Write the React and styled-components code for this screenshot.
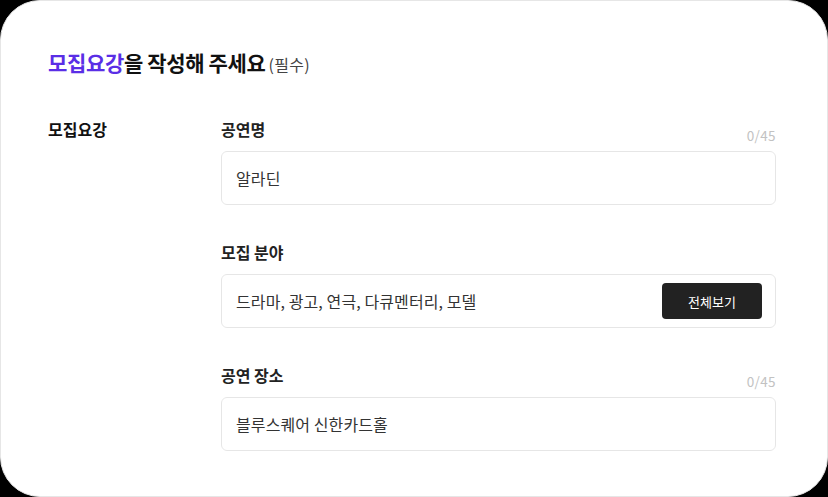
import React from 'react';
import styled, { createGlobalStyle } from 'styled-components';

const GlobalStyle = createGlobalStyle`
  html, body {
    margin: 0;
    padding: 0;
    background: #000;
  }
  body {
    font-family: "Noto Sans CJK KR", "Noto Sans", sans-serif;
  }
`;

const Card = styled.div`
  box-sizing: border-box;
  width: 828px;
  height: 497px;
  background: #fff;
  border: 1.5px solid #e6e6e6;
  border-radius: 40px;
  padding: 46px 51px 0 47px;
  overflow: hidden;
`;

const Title = styled.h2`
  margin: 0;
  font-size: 21px;
  line-height: 30px;
  font-weight: 700;
  color: #111;
  letter-spacing: -0.35px;
`;

const Accent = styled.span`
  color: #5a2ee6;
`;

const Required = styled.span`
  margin-left: 3px;
  font-size: 16px;
  font-weight: 400;
  color: #444;
  letter-spacing: 0.3px;
`;

const Section = styled.div`
  display: grid;
  grid-template-columns: 173px 1fr;
  margin-top: 38px;
`;

const SectionLabel = styled.div`
  font-size: 16px;
  line-height: 24px;
  font-weight: 700;
  color: #111;
`;

const Fields = styled.div`
  display: flex;
  flex-direction: column;
  gap: 35px;
`;

const Field = styled.div`
  display: flex;
  flex-direction: column;
  gap: 10px;
`;

const LabelRow = styled.div`
  display: flex;
  justify-content: space-between;
  align-items: flex-end;
`;

const FieldLabel = styled.div`
  font-size: 16px;
  line-height: 24px;
  font-weight: 700;
  color: #222;
`;

const Counter = styled.div`
  font-size: 13.5px;
  line-height: 20px;
  color: #c2c2c2;
  letter-spacing: 0.4px;
  margin-bottom: -4px;
`;

const Box = styled.div`
  box-sizing: border-box;
  height: 54px;
  border: 1px solid #e6e6e6;
  border-radius: 6px;
  padding: 0 13px 0 14px;
  display: flex;
  align-items: center;
  justify-content: space-between;
`;

const Value = styled.span`
  font-size: 16px;
  color: #333;
  letter-spacing: 0.1px;
`;

const ViewAll = styled.button`
  width: 100px;
  height: 36px;
  border: none;
  border-radius: 4px;
  background: #222;
  color: #fff;
  font-family: inherit;
  font-size: 13px;
  cursor: pointer;
`;

const fields = [
  { label: '공연명', value: '알라딘', counter: '0/45' },
  { label: '모집 분야', value: '드라마, 광고, 연극, 다큐멘터리, 모델', action: '전체보기' },
  { label: '공연 장소', value: '블루스퀘어 신한카드홀', counter: '0/45' },
];

const App = () => (
  <>
    <GlobalStyle />
    <Card>
      <Title>
        <Accent>모집요강</Accent>을 작성해 주세요
        <Required>(필수)</Required>
      </Title>
      <Section>
        <SectionLabel>모집요강</SectionLabel>
        <Fields>
          {fields.map((f) => (
            <Field key={f.label}>
              <LabelRow>
                <FieldLabel>{f.label}</FieldLabel>
                {f.counter && <Counter>{f.counter}</Counter>}
              </LabelRow>
              <Box>
                <Value>{f.value}</Value>
                {f.action && <ViewAll>{f.action}</ViewAll>}
              </Box>
            </Field>
          ))}
        </Fields>
      </Section>
    </Card>
  </>
);

export default App;
